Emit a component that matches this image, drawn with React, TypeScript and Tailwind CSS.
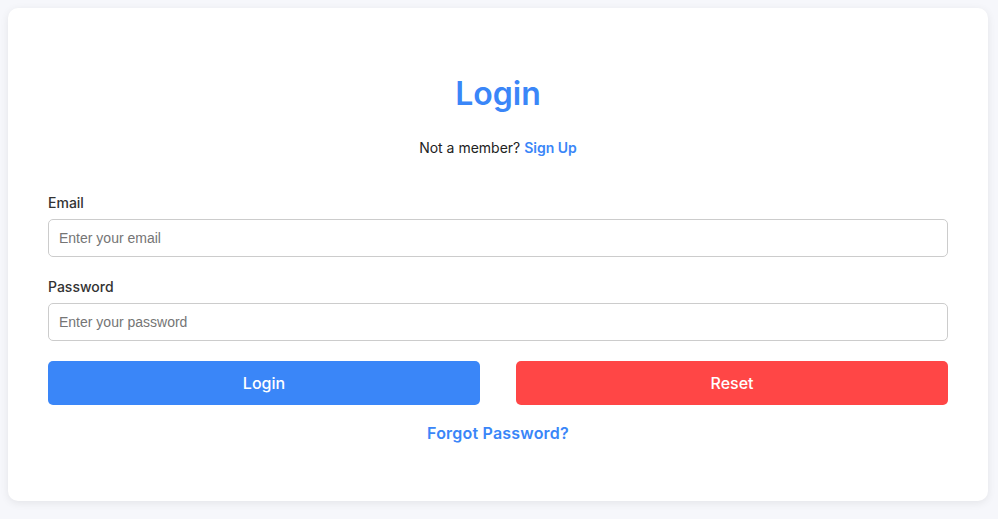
export default function App() {
  return (
    <div className="min-h-[519px] w-full bg-[#f6f7fb] pl-2 pr-[10px] pt-2" style={{ fontFamily: "Inter, 'Noto Sans', sans-serif" }}>
      <div className="flex h-[493px] flex-col rounded-[10px] bg-white px-10 pt-[62px] shadow-[0_2px_8px_rgba(0,0,0,0.08)]">
        <h1 className="text-center text-[32px] font-semibold leading-[48px] text-[#3a86f8]">Login</h1>
        <p className="mt-[20px] text-center text-[14px] leading-[20px] text-[#222]">
          Not a member? <span className="font-semibold text-[#3a86f8]">Sign Up</span>
        </p>
        <label className="mt-[35px] text-[14px] font-medium leading-[20px] text-[#333]">Email</label>
        <input
          className="mt-[6px] h-[38px] w-full rounded-[5px] border border-[#cccccc] px-[10px] text-[14px] outline-none placeholder:text-[#757575]"
          style={{ fontFamily: "'Liberation Sans', Arial, sans-serif" }}
          placeholder="Enter your email"
        />
        <label className="mt-[20px] text-[14px] font-medium leading-[20px] text-[#333]">Password</label>
        <input
          className="mt-[6px] h-[38px] w-full rounded-[5px] border border-[#cccccc] px-[10px] text-[14px] outline-none placeholder:text-[#757575]"
          style={{ fontFamily: "'Liberation Sans', Arial, sans-serif" }}
          placeholder="Enter your password"
        />
        <div className="mt-[20px] grid grid-cols-2 gap-9">
          <button className="h-[44px] rounded-[5px] bg-[#3a86f8] text-[16px] font-medium text-white">Login</button>
          <button className="h-[44px] rounded-[5px] bg-[#ff4646] text-[16px] font-medium text-white">Reset</button>
        </div>
        <a className="mt-[16px] text-center text-[16px] font-semibold leading-[24px] tracking-[0.2px] text-[#3a86f8]">Forgot Password?</a>
      </div>
    </div>
  );
}
